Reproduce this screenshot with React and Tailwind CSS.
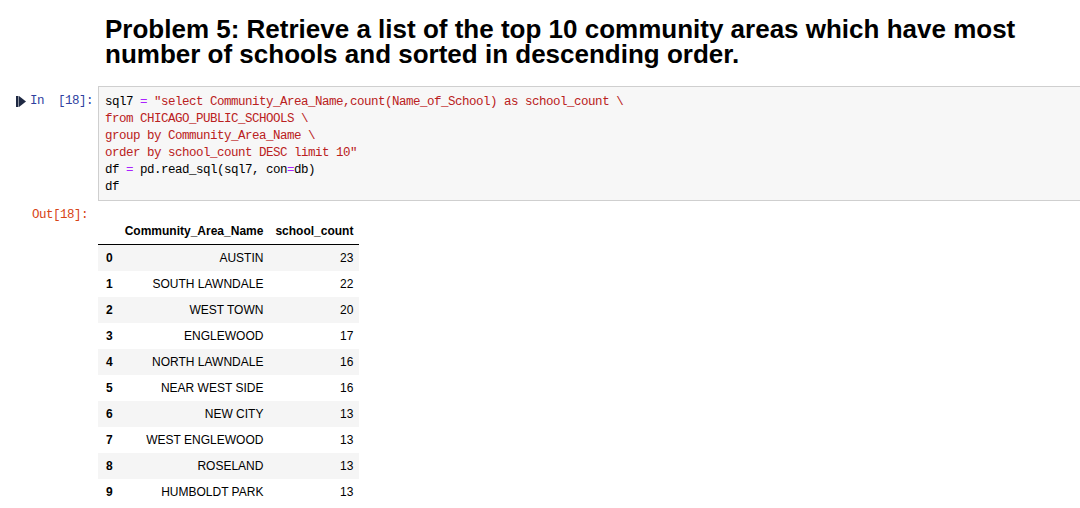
const rows = [
  ['0', 'AUSTIN', 23],
  ['1', 'SOUTH LAWNDALE', 22],
  ['2', 'WEST TOWN', 20],
  ['3', 'ENGLEWOOD', 17],
  ['4', 'NORTH LAWNDALE', 16],
  ['5', 'NEAR WEST SIDE', 16],
  ['6', 'NEW CITY', 13],
  ['7', 'WEST ENGLEWOOD', 13],
  ['8', 'ROSELAND', 13],
  ['9', 'HUMBOLDT PARK', 13],
];

const mono = "font-['Liberation_Mono','DejaVu_Sans_Mono',monospace] text-[12.5px] tracking-[-0.5px] leading-[17px]";

function RunIcon() {
  return (
    <svg width="10" height="11" viewBox="0 0 10 11" className="mr-[4px]">
      <rect x="0" y="0" width="2.5" height="11" fill="#1f2a44" />
      <path d="M3 0 L10 5.5 L3 11 Z" fill="#1f2a44" />
    </svg>
  );
}

function Str({ children }) {
  return <span className="text-[#ba2121]">{children}</span>;
}

function Op({ children }) {
  return <span className="text-[#aa22ff]">{children}</span>;
}

export default function App() {
  return (
    <div className="w-[1080px] h-[508px] overflow-hidden bg-white font-['Liberation_Sans',Arial,sans-serif] text-black">
      <div className="pl-[105px] pt-[17px]">
        <h2 className="text-[26px] leading-[25px] font-bold">
          Problem 5: Retrieve a list of the top 10 community areas which have most number of schools and sorted in
          descending order.
        </h2>
      </div>

      <div className="flex mt-[19px]">
        <div className={`w-[98px] shrink-0 flex items-start justify-end pr-[5px] pt-[7px] text-[#303f9f] ${mono}`}>
          <div className="flex items-center h-[17px]">
            <RunIcon />
            <span className="whitespace-pre">{'In  [18]:'}</span>
          </div>
        </div>
        <div
          className={`flex-1 bg-[#f7f7f7] border-y border-l border-[#cfcfcf] pl-[6px] pt-[7px] pb-[4px] whitespace-pre ${mono}`}
        >
          <div>
            sql7 <Op>=</Op> <Str>{'"select Community_Area_Name,count(Name_of_School) as school_count \\'}</Str>
          </div>
          <div>
            <Str>{'from CHICAGO_PUBLIC_SCHOOLS \\'}</Str>
          </div>
          <div>
            <Str>{'group by Community_Area_Name \\'}</Str>
          </div>
          <div>
            <Str>{'order by school_count DESC limit 10"'}</Str>
          </div>
          <div>
            df <Op>=</Op> pd.read_sql(sql7, con<Op>=</Op>db)
          </div>
          <div>df</div>
        </div>
      </div>

      <div className="flex mt-[5px]">
        <div className={`w-[98px] shrink-0 text-right pr-[10px] pt-[1px] text-[#d84315] ${mono}`}>Out[18]:</div>
        <div className="pt-[12px]">
          <table className="border-collapse text-[12px] leading-[14px]">
            <thead>
              <tr className="border-b border-black">
                <th className="px-[6px] py-[6px]"></th>
                <th className="px-[6px] py-[6px] text-right font-bold">Community_Area_Name</th>
                <th className="px-[6px] py-[6px] text-right font-bold">school_count</th>
              </tr>
            </thead>
            <tbody>
              {rows.map(([i, name, count], n) => (
                <tr key={i} className={n % 2 === 0 ? 'bg-[#f5f5f5]' : 'bg-white'}>
                  <th className="pl-[8px] pr-[6px] py-[6px] text-left font-bold">{i}</th>
                  <td className="px-[6px] py-[6px] text-right">{name}</td>
                  <td className="px-[6px] py-[6px] text-right">{count}</td>
                </tr>
              ))}
            </tbody>
          </table>
        </div>
      </div>
    </div>
  );
}
